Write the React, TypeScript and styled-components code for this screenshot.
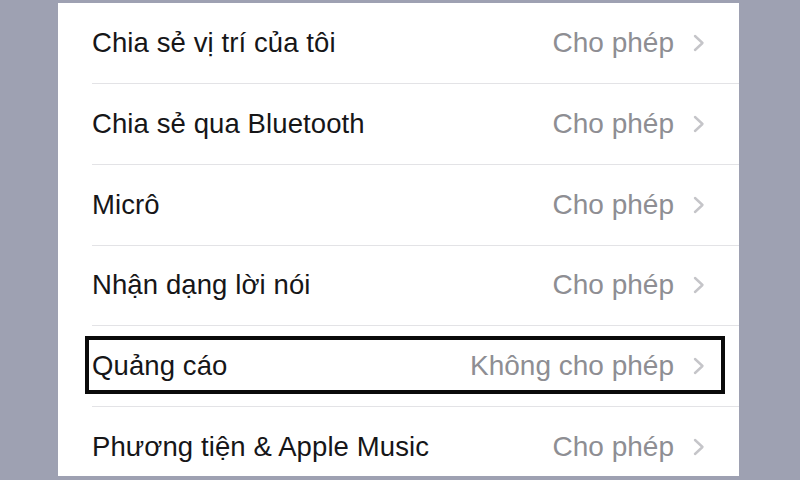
import React from "react";
import styled, { createGlobalStyle } from "styled-components";

const GlobalStyle = createGlobalStyle`
  html, body {
    margin: 0;
    padding: 0;
    background: #9ea1b2;
    width: 800px;
    height: 480px;
    overflow: hidden;
  }
  body {
    font-family: "Liberation Sans", Arial, sans-serif;
  }
`;

const Stage = styled.div`
  width: 800px;
  height: 480px;
  padding-top: 3.25px;
  box-sizing: border-box;
  background: #9ea1b2;
`;

const Panel = styled.div`
  margin-left: 58px;
  width: 681px;
  height: 472.75px;
  background: #ffffff;
  overflow: hidden;
`;

const Row = styled.div`
  position: relative;
  height: 80.75px;
  box-sizing: border-box;
  padding-left: 34px;
  display: flex;
`;

const RowInner = styled.div<{ $last?: boolean }>`
  flex: 1;
  display: flex;
  align-items: center;
  justify-content: space-between;
  padding-right: 34px;
  border-bottom: ${(p) => (p.$last ? "none" : "1px solid #e3e3e6")};
`;

const Label = styled.span`
  font-size: 27.5px;
  color: #161618;
  letter-spacing: 0.1px;
`;

const Value = styled.span`
  display: flex;
  align-items: center;
  gap: 19px;
  font-size: 28px;
  color: #8e8e93;
`;

const Chevron = styled.svg`
  width: 12px;
  height: 18px;
  display: block;
`;

const Highlight = styled.div`
  position: absolute;
  left: 27px;
  right: 14px;
  top: 10px;
  height: 58px;
  box-sizing: border-box;
  border: 4px solid #0a0a0a;
  pointer-events: none;
`;

const items = [
  { label: "Chia sẻ vị trí của tôi", value: "Cho phép" },
  { label: "Chia sẻ qua Bluetooth", value: "Cho phép" },
  { label: "Micrô", value: "Cho phép" },
  { label: "Nhận dạng lời nói", value: "Cho phép" },
  { label: "Quảng cáo", value: "Không cho phép", highlight: true },
  { label: "Phương tiện & Apple Music", value: "Cho phép" },
];

export default function App() {
  return (
    <Stage>
      <GlobalStyle />
      <Panel>
        {items.map((it, i) => (
          <Row key={it.label}>
            <RowInner $last={i === items.length - 1}>
              <Label>{it.label}</Label>
              <Value>
                {it.value}
                <Chevron viewBox="0 0 12 18">
                  <path
                    d="M2 2 L9.5 9 L2 16"
                    fill="none"
                    stroke="#c5c5c9"
                    strokeWidth="2.4"
                    strokeLinecap="round"
                    strokeLinejoin="round"
                  />
                </Chevron>
              </Value>
            </RowInner>
            {it.highlight && <Highlight />}
          </Row>
        ))}
      </Panel>
    </Stage>
  );
}
